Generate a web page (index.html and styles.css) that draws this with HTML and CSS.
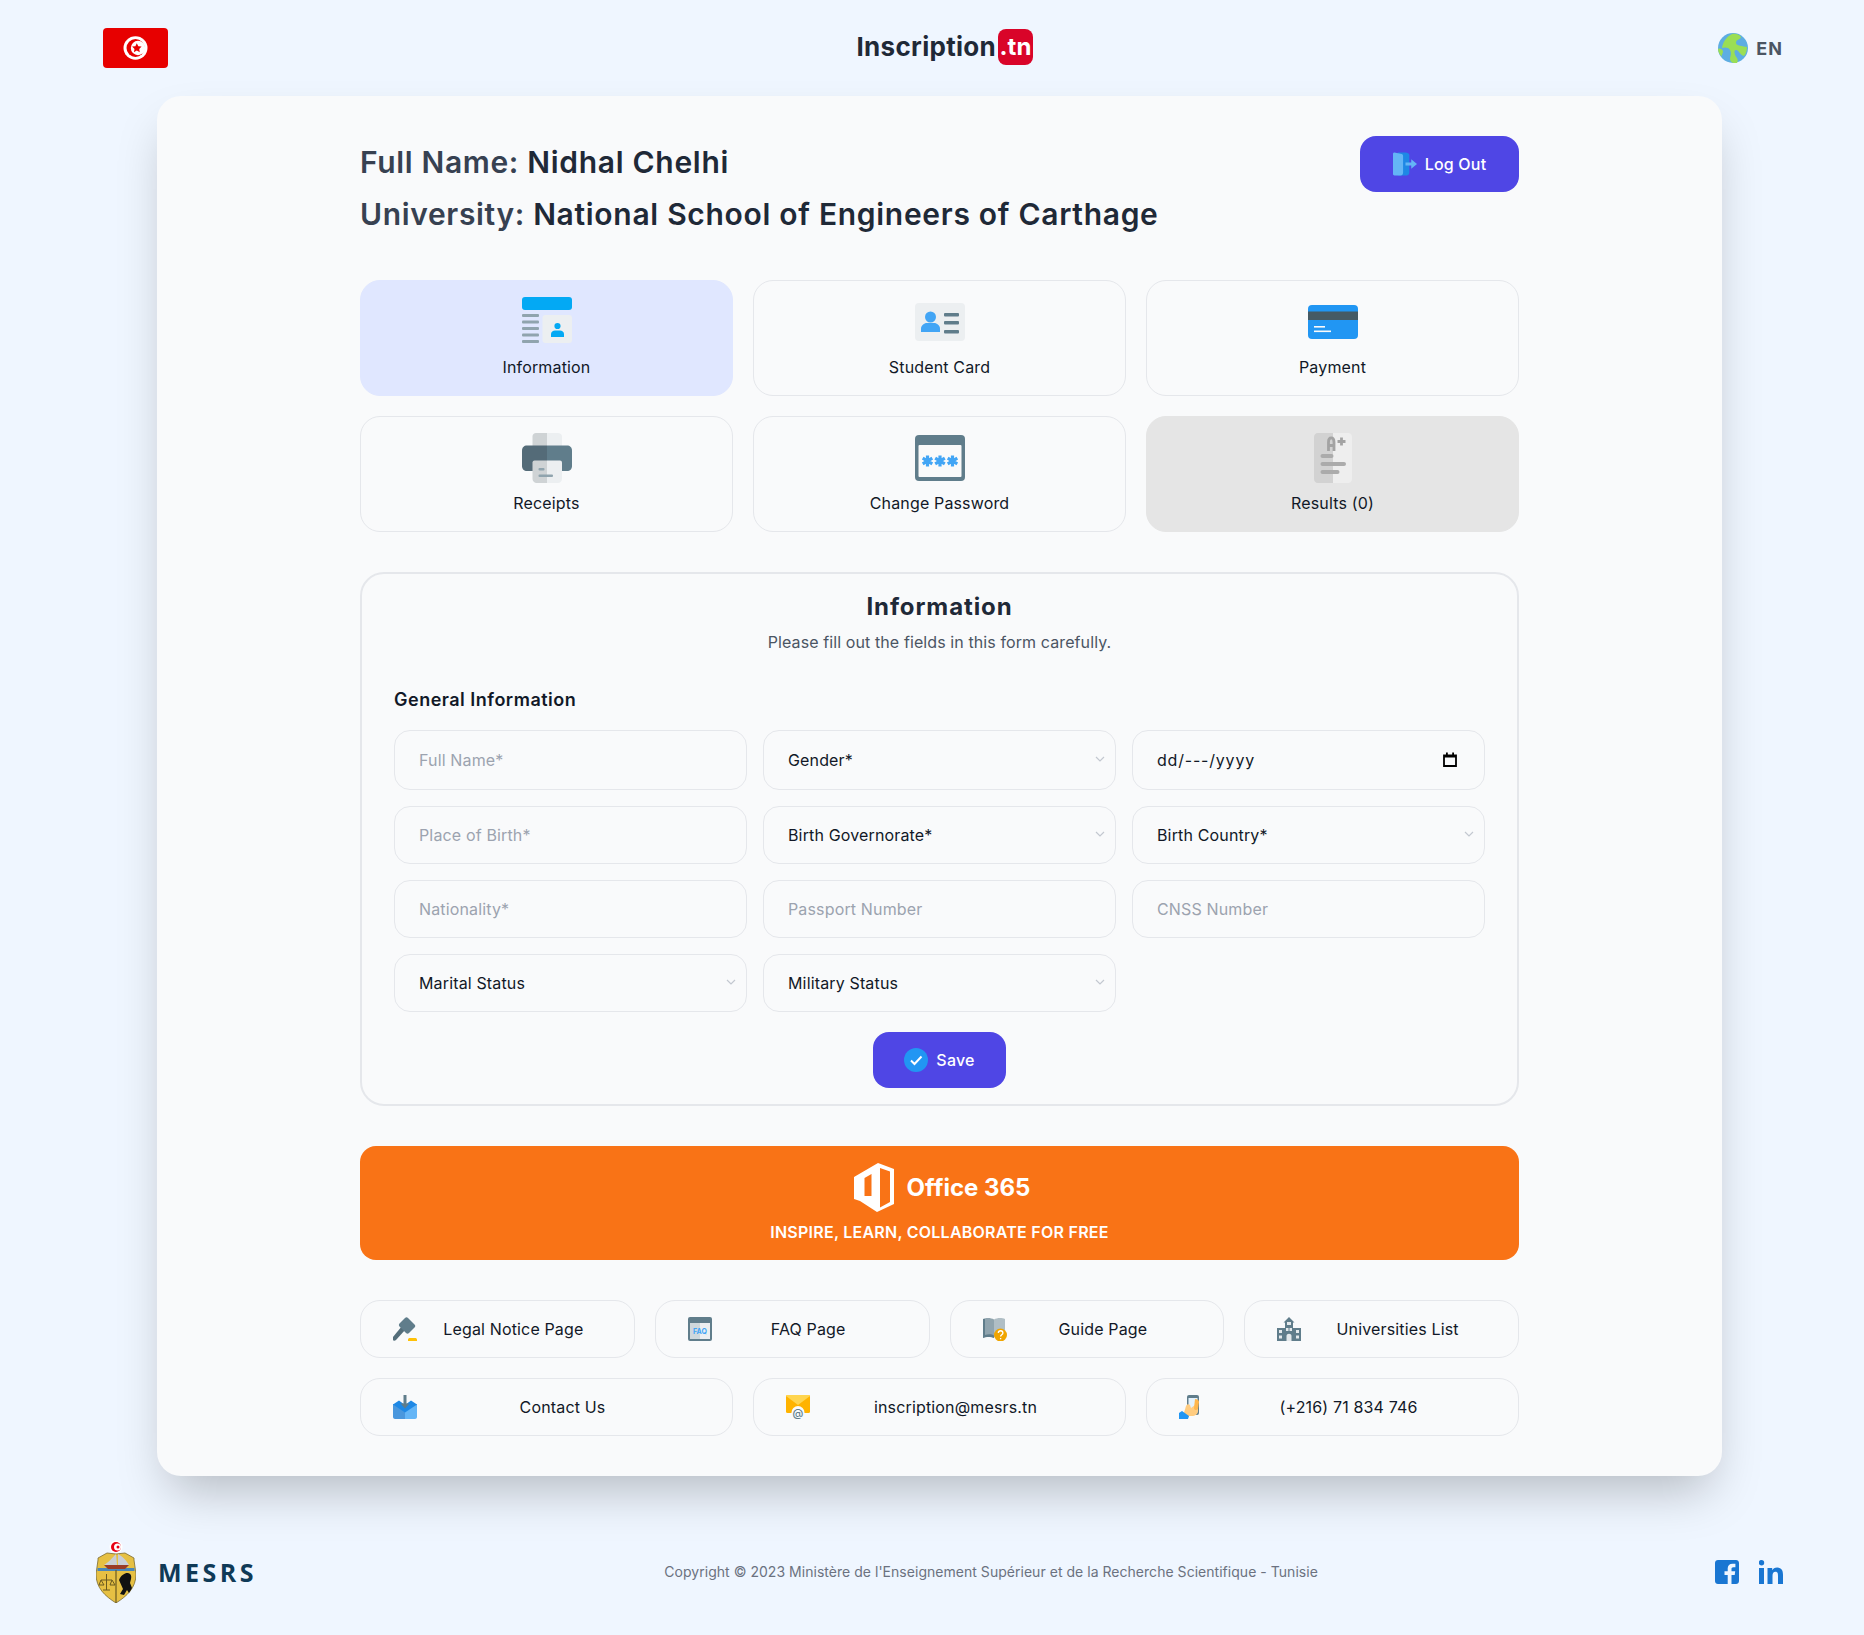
FILE: index.html
```html
<!DOCTYPE html>
<html lang="en">
<head>
<meta charset="utf-8">
<title>Inscription.tn</title>
<link rel="stylesheet" href="styles.css">
</head>
<body>
<header class="topbar">
  <svg class="flag" viewBox="0 0 65 40"><rect width="65" height="40" rx="4" fill="#e70000"/><ellipse cx="32.500" cy="20" rx="12" ry="11.700" fill="#fff"/><circle cx="32.500" cy="20" r="9" fill="#e70000"/><circle cx="35" cy="20" r="7.200" fill="#fff"/><path d="M33.800 15.200l1.500 3 3.300.4-2.400 2.300.6 3.300-3-1.600-2.900 1.600.6-3.300-2.400-2.300 3.300-.4z" fill="#e70000"/></svg>
  <div class="brand"><span>Inscription</span><span class="brand-badge">.tn</span></div>
  <div class="lang">
    <svg class="globe" viewBox="0 0 30 30"><circle cx="15" cy="15" r="15" fill="#5dade2"/><path d="M14 1c4-1 8 1 9 3-1 3-5 2-5 6 0 3 7 3 11 4 0 3-1 7-3 9-4-1-5-6-8-6-3 0-1 6 1 8 1 2 1 3 0 5-3 1-7-1-7-4 0-3 2-5 0-9-1-3-6-3-8-2 1-6 4-11 10-14z" fill="#9ade55"/><path d="M0 16c2-1 4 0 5 2 0 3-2 4-1 6-2-2-4-5-4-8z" fill="#9ade55"/></svg>
    <span>EN</span>
  </div>
</header>

<main class="card">
  <section class="identity">
    <div class="identity-text">
      <h2 class="id-line">Full Name: <strong>Nidhal Chelhi</strong></h2>
      <h2 class="id-line">University: <strong>National School of Engineers of Carthage</strong></h2>
    </div>
    <button class="btn btn-logout" type="button">
      <svg class="ico24" viewBox="0 0 25 24"><path d="M5 0h8c2 0 4 1 4 3v18c0 2-2 3-4 3H5z" fill="#1e88e5"/><path d="M1.500 0L9 1.500c1 .2 1.500 1 1.500 2V21c0 1.500-1 2.800-2.500 3L1.500 24C.6 24 0 23.400 0 22.500V1.500C0 .6.600 0 1.500 0z" fill="#64b5f6"/><path d="M13 10.500h6V7l6 5-6 5v-3.500h-6z" fill="#64b5f6"/></svg>
      <span>Log Out</span>
    </button>
  </section>

  <nav class="tiles">
    <a class="tile tile-active">
      <svg class="tile-ico" viewBox="0 0 50 50"><rect width="50" height="13" rx="3" fill="#03a9f4"/><g fill="#90a4ae"><rect y="17" width="17" height="3" rx="1"/><rect y="23.500" width="17" height="3" rx="1"/><rect y="30" width="17" height="3" rx="1"/><rect y="36.500" width="17" height="3" rx="1"/><rect y="43" width="17" height="3" rx="1"/></g><rect x="20.500" y="18" width="29.500" height="28" rx="3" fill="#eceff1"/><circle cx="35.500" cy="29" r="3.100" fill="#03a9f4"/><path d="M29 40v-3c0-2 2-3.500 4-3.500h5c2 0 4 1.500 4 3.500v3z" fill="#03a9f4"/></svg>
      <span>Information</span>
    </a>
    <a class="tile">
      <svg class="tile-ico" viewBox="0 0 50 50"><rect y="6" width="50" height="38" rx="4" fill="#eceff1"/><circle cx="15.500" cy="20" r="5.500" fill="#42a5f5"/><path d="M6 35v-3.500c0-3 3-5.500 6-5.500h7c3 0 6 2.500 6 5.500V35z" fill="#42a5f5"/><g fill="#607d8b"><rect x="29" y="16" width="15" height="3.400" rx="1"/><rect x="29" y="24" width="15" height="3.400" rx="1"/><rect x="29" y="33" width="15" height="3.400" rx="1"/></g></svg>
      <span>Student Card</span>
    </a>
    <a class="tile">
      <svg class="tile-ico" viewBox="0 0 50 50"><rect y="8" width="50" height="34" rx="4" fill="#2196f3"/><rect y="14.500" width="50" height="8.500" fill="#455a64"/><rect x="6" y="29" width="11" height="1.600" fill="#fafafa"/><rect x="6" y="33.500" width="17" height="1.600" fill="#fafafa"/></svg>
      <span>Payment</span>
    </a>
    <a class="tile">
      <svg class="tile-ico" viewBox="0 0 50 50"><path d="M25 0H14c-2 0-3.500 1.500-3.500 3.500V15H25z" fill="#cfd3d5"/><path d="M25 0h11c2 0 4 1.500 4 3.500V15H25z" fill="#eceff1"/><path d="M25 12.500H5c-3 0-5 2-5 5V33c0 3 2 5 5 5h20z" fill="#546b78"/><path d="M25 12.500h20c3 0 5 2 5 5V33c0 3-2 5-5 5H25z" fill="#607d8b"/><path d="M25 27.500H12.500c-1 0-2 .8-2 2V46c0 2 2 4 4 4H25z" fill="#cfd3d5"/><path d="M25 27.500h13c1 0 2 .8 2 2V46c0 2-2 4-4 4H25z" fill="#eceff1"/><rect x="16.500" y="35" width="6" height="2.500" rx="1" fill="#90a4ae"/><rect x="16.500" y="41.500" width="14.500" height="2.500" rx="1" fill="#90a4ae"/></svg>
      <span>Receipts</span>
    </a>
    <a class="tile">
      <svg class="tile-ico" viewBox="0 0 50 50"><rect y="2" width="50" height="46" rx="4" fill="#607d8b"/><rect x="3.500" y="12" width="43" height="32" rx="1" fill="#fafafa"/><g stroke="#42a5f5" stroke-width="3.200" fill="none"><path d="M12.500 22.500v11M7.700 25.200l9.600 5.600M7.700 30.800l9.600-5.600"/><path d="M25 22.500v11M20.200 25.200l9.600 5.600M20.200 30.800l9.600-5.600"/><path d="M37.500 22.500v11M32.700 25.200l9.600 5.600M32.700 30.800l9.600-5.600"/></g></svg>
      <span>Change Password</span>
    </a>
    <a class="tile tile-muted">
      <svg class="tile-ico" viewBox="0 0 50 50"><path d="M25 0H10C7.500 0 6 2 6 4v42c0 2 1.500 4 4 4h15z" fill="#d2d2d2"/><path d="M25 0h15c2.500 0 4 2 4 4v42c0 2-1.500 4-4 4H25z" fill="#eeeeee"/><path d="M20.500 18V9c0-5.500 5.500-5.500 5.500 0v9M20.500 12.500h5.500" stroke="#a3a3a3" stroke-width="2.800" fill="none"/><path d="M33.500 4.500v8M29.500 8.500h8" stroke="#a3a3a3" stroke-width="2.800" fill="none"/><g fill="#ababab"><rect x="12.500" y="21" width="13" height="4" rx="2"/><rect x="12.500" y="29" width="25.500" height="4" rx="2"/><rect x="12.500" y="37" width="19" height="4" rx="2"/></g></svg>
      <span>Results (0)</span>
    </a>
  </nav>

  <form class="form-box">
    <h3 class="form-title">Information</h3>
    <p class="form-sub">Please fill out the fields in this form carefully.</p>
    <h4 class="form-section">General Information</h4>
    <div class="form-grid">
      <input class="ctl" type="text" placeholder="Full Name*">
      <div class="sel"><select class="ctl"><option>Gender*</option></select><svg class="chev" viewBox="0 0 10 6"><path d="M1 1l4 4 4-4" fill="none" stroke="#c3c8d0" stroke-width="1.200"/></svg></div>
      <div class="sel"><input class="ctl ctl-date" type="text" value="dd/---/yyyy" aria-label="Birth date"><svg class="cal" viewBox="0 0 14 15"><path d="M1 3.500h12v10.500H1z" fill="none" stroke="#000" stroke-width="1.800"/><path d="M1 3h12v2.500H1zM3 .5h1.800v3H3zM9.200.5H11v3H9.200z"/></svg></div>
      <input class="ctl" type="text" placeholder="Place of Birth*">
      <div class="sel"><select class="ctl"><option>Birth Governorate*</option></select><svg class="chev" viewBox="0 0 10 6"><path d="M1 1l4 4 4-4" fill="none" stroke="#c3c8d0" stroke-width="1.200"/></svg></div>
      <div class="sel"><select class="ctl"><option>Birth Country*</option></select><svg class="chev" viewBox="0 0 10 6"><path d="M1 1l4 4 4-4" fill="none" stroke="#c3c8d0" stroke-width="1.200"/></svg></div>
      <input class="ctl" type="text" placeholder="Nationality*">
      <input class="ctl" type="text" placeholder="Passport Number">
      <input class="ctl" type="text" placeholder="CNSS Number">
      <div class="sel"><select class="ctl"><option>Marital Status</option></select><svg class="chev" viewBox="0 0 10 6"><path d="M1 1l4 4 4-4" fill="none" stroke="#c3c8d0" stroke-width="1.200"/></svg></div>
      <div class="sel"><select class="ctl"><option>Military Status</option></select><svg class="chev" viewBox="0 0 10 6"><path d="M1 1l4 4 4-4" fill="none" stroke="#c3c8d0" stroke-width="1.200"/></svg></div>
    </div>
    <div class="form-actions">
      <button class="btn btn-save" type="button">
        <svg class="ico24" viewBox="0 0 24 24"><circle cx="12" cy="12" r="12" fill="#2196f3"/><path d="M7 12.500l3.500 3.500L17.500 8.500" fill="none" stroke="#fff" stroke-width="2"/></svg>
        <span>Save</span>
      </button>
    </div>
  </form>

  <section class="office">
    <div class="office-head">
      <svg class="office-ico" viewBox="0 0 40 49"><path fill="#fff" fill-rule="evenodd" d="M0 14L24 0l16 6v35l-17 8-17-11-6-2zM10.500 15l7-4v22h-7zM26 5l10 3.500V39l-10 5.500z"/></svg>
      <span>Office 365</span>
    </div>
    <p class="office-sub">INSPIRE, LEARN, COLLABORATE FOR FREE</p>
  </section>

  <nav class="links links-4">
    <a class="link">
      <svg class="ico24" viewBox="0 0 24 24"><path d="M9 9l3.500 3.500L3 23c-1 1-2.500 1-3.300 0-.7-1-.5-2 .3-3z" fill="#546e7a"/><path d="M6.500 6.500L12 1c1-1 2-1 3 0l6.500 6.500c1 1 1 2 0 3L16 16c-1 1-2 1-3 0L6.500 9.500c-.8-1-.8-2 0-3z" fill="#607d8b"/><path d="M15 24v-1.500c0-1 1-1.500 2-1.500h5c1 0 2 .5 2 1.500V24z" fill="#ffc107"/></svg>
      <span>Legal Notice Page</span>
    </a>
    <a class="link">
      <svg class="ico24" viewBox="0 0 24 24"><rect y="0" width="24" height="24" rx="2" fill="#607d8b"/><rect x="2" y="6" width="10" height="16" fill="#cfd8dc"/><rect x="12" y="6" width="10" height="16" fill="#eceff1"/><text class="faq" x="12" y="17" text-anchor="middle">FAQ</text></svg>
      <span>FAQ Page</span>
    </a>
    <a class="link">
      <svg class="ico24" viewBox="0 0 24 24"><path d="M0 2c3-1.500 8-1.500 11 .5V20c-3-1.500-8-1.500-11 0z" fill="#90a4ae"/><path d="M11 2.500c3-2 8-2 11-.5v18H11z" fill="#b0bec5"/><path d="M0 2h2v16c3-1 7-1 9 .5V21c-3-1.500-8-1.500-11 0z" fill="#607d8b"/><circle cx="17.500" cy="18" r="6.500" fill="#f0a500"/><path d="M15.300 16c.2-3 4.600-3 4.600 0 0 1.800-2.300 1.800-2.300 3.500M17.600 21v1.200" stroke="#fff" stroke-width="1.300" fill="none"/></svg>
      <span>Guide Page</span>
    </a>
    <a class="link">
      <svg class="ico24" viewBox="0 0 24 24"><path d="M12 0l5.500 5.500H16V11h8v13H0V11h8V5.500H6.500z" fill="#607d8b"/><g fill="#e4e9ec"><rect x="2" y="13" width="3" height="3"/><rect x="19" y="13" width="3" height="3"/><rect x="2" y="18.500" width="3" height="3"/><rect x="19" y="18.500" width="3" height="3"/><rect x="10" y="5" width="4" height="3"/><rect x="9" y="11" width="2.500" height="3"/><rect x="12.500" y="11" width="2.500" height="3"/><path d="M9.500 24v-5c0-3 5-3 5 0v5z"/></g></svg>
      <span>Universities List</span>
    </a>
  </nav>

  <nav class="links links-3">
    <a class="link">
      <svg class="ico24" viewBox="0 0 24 24"><path d="M12 10v14h10c1 0 2-1 2-2V9z" fill="#64b5f6"/><path d="M0 9v13c0 1 1 2 2 2h10V10z" fill="#4a97dd"/><path d="M0 9.500L6 5.500 12 10l6-4.500 6 4-12 8z" fill="#1e88e5"/><path d="M12 13.500L7.500 8.500h3V0h3v8.500h3z" fill="#607d8b"/></svg>
      <span>Contact Us</span>
    </a>
    <a class="link">
      <svg class="ico24" viewBox="0 0 24 24"><rect y="0" width="24" height="18" rx="1.500" fill="#ffb300"/><path d="M0 1c0-.5.500-1 1-1h22c.5 0 1 .5 1 1L12 10z" fill="#ffd54f"/><circle cx="12" cy="17.500" r="6.500" fill="#f9fafb"/><text class="at" x="12" y="22" text-anchor="middle">@</text></svg>
      <span>inscription@mesrs.tn</span>
    </a>
    <a class="link">
      <svg class="ico24" viewBox="0 0 24 24"><rect x="8" y="0" width="12" height="20" rx="2" fill="#607d8b"/><rect x="9.500" y="3" width="9" height="14.500" fill="#e3f2fd"/><path d="M4 21L7 11c1-2 3-2 4-1l1 3 4-3 3 1v5c0 3-3 5-6 5h-3l-2 3z" fill="#ffcc80"/><path d="M16 4c2 0 4 1 4 3l-1 7c-2 2-4 1-4-1z" fill="#ffb74d"/><path d="M0 18l3-2 7 5-1 3H0z" fill="#2196f3"/></svg>
      <span>(+216) 71 834 746</span>
    </a>
  </nav>
</main>

<footer class="footer">
  <div class="ministry">
    <svg class="crest" viewBox="0 0 40 63"><circle cx="20" cy="7" r="6.500" fill="#fff"/><circle cx="20" cy="7" r="5" fill="#e70013"/><circle cx="21.500" cy="7" r="3.500" fill="#fff"/><circle cx="22" cy="7" r="1.500" fill="#e70013"/><path d="M2 18l9-5 9 1 9-1 9 5v2l2 14c0 14-9 22-20 29C9 56 0 48 0 34l2-14z" fill="#e6c043" stroke="#7a6a30" stroke-width=".8"/><path d="M1.500 28h37v3h-37z" fill="#4a86b8"/><path d="M20 30v33" stroke="#6b5a20" stroke-width="1.200"/><path d="M8 25c4-2 9-8 12-11l1 11zM22 14c4 2 9 7 11 11H22z" fill="#c9ced6"/><path d="M8 25h25l-4 4H12z" fill="#9a3b26"/><path d="M5 40h11M10.500 34v16M7 50h7M5 40l-2 5h5zM16 40l-2 5h5z" stroke="#6b5a20" stroke-width="1" fill="none"/><path d="M23 40c2-5 6-7 8-7 3 0 5 2 4 6l-1 4 2 5-3 5-2-3-3 5-4-1 3-5z" fill="#111"/></svg>
    <span class="ministry-name">MESRS</span>
  </div>
  <p class="copyright">Copyright © 2023 Ministère de l'Enseignement Supérieur et de la Recherche Scientifique - Tunisie</p>
  <div class="socials">
    <svg class="social" viewBox="0 0 24 24"><path fill="#1976d2" d="M3 0h18c1.700 0 3 1.300 3 3v18c0 1.700-1.300 3-3 3h-4.500v-9h3.200l.5-3.800h-3.700V9c0-1.100.4-1.800 1.900-1.800h2V3.800c-.4 0-1.500-.1-2.900-.1-2.900 0-4.800 1.700-4.800 4.900v2.600H9.500V15h3.200v9H3c-1.700 0-3-1.300-3-3V3c0-1.700 1.300-3 3-3z"/></svg>
    <svg class="social" viewBox="0 0 24 24"><path fill="#1976d2" d="M0 8h5v16H0zM2.500 0a2.700 2.700 0 110 5.400 2.700 2.700 0 010-5.400zM8.500 8h4.700v2.300c.8-1.500 2.500-2.700 5-2.700 4.800 0 5.800 3.100 5.800 7.300V24h-5v-8c0-2-.1-4.200-2.500-4.200s-3 2-3 4.100V24h-5z"/></svg>
  </div>
</footer>
</body>
</html>
```

FILE: styles.css
```css
* { box-sizing: border-box; }
html, body { margin: 0; padding: 0; }
body {
  background: #eff6ff;
  font-family: "Inter", "Noto Sans", "Liberation Sans", sans-serif;
  color: #111827;
  width: 1864px;
}
.topbar {
  height: 96px;
  display: flex;
  align-items: center;
  justify-content: space-between;
  padding: 0 81px 0 103px;
}
.flag { width: 65px; height: 40px; display: block; }
.brand { display: flex; align-items: center; font-size: 26px; line-height: 32px; font-weight: 700; color: #1f2937; letter-spacing: .3px; margin: -2px 0 0 3px; }
.brand-badge { background: #d90429; color: #fff; border-radius: 8px; height: 36px; line-height: 35px; padding: 0 1.500px; margin-left: 2px; font-size: 24px; letter-spacing: 0; }
.lang { display: flex; align-items: center; gap: 8px; font-size: 18px; font-weight: 700; color: #4b5563; letter-spacing: 1px; }
.globe { width: 30px; height: 30px; display: block; }

.card {
  margin: 0 142px 0 157px;
  padding: 40px 203px;
  background: #f9fafb;
  border-radius: 24px;
  box-shadow: 0 25px 50px -12px rgba(0, 0, 0, .25);
}
.identity { display: flex; justify-content: space-between; align-items: flex-start; margin-bottom: 48px; height: 96px; }
.identity-text { padding-top: 8px; }
.id-line { margin: 0 0 16px; font-size: 30px; line-height: 36px; font-weight: 600; color: #374151; letter-spacing: .65px; }
.id-line strong { font-weight: 600; color: #1f2937; letter-spacing: .7px; }

.btn { display: flex; align-items: center; justify-content: center; gap: 8px; border: 0; background: #4f46e5; color: #fff; font: 500 16px/24px "Inter", sans-serif; height: 56px; border-radius: 16px; padding: 0; letter-spacing: .2px; }
.btn-logout { width: 159px; }
.btn-save { width: 133px; }
.ico24 { width: 24px; height: 24px; display: block; flex: none; }

.tiles { display: grid; grid-template-columns: repeat(3, 1fr); gap: 20px; }
.tile { height: 116px; display: flex; flex-direction: column; align-items: center; padding: 16px; border: 1px solid #e5e7eb; border-radius: 20px; font-size: 16px; line-height: 24px; color: #111827; letter-spacing: .15px; }
.tile span { margin-top: 8px; }
.tile-ico { width: 50px; height: 50px; display: block; flex: none; }
.tile-active { background: #e0e7ff; border-color: #e0e7ff; }
.tile-muted { background: #e5e5e5; border-color: #e5e5e5; }

.form-box { margin-top: 40px; border: 2px solid #e5e7eb; border-radius: 24px; padding: 17px 32px 16px; }
.form-title { margin: 0; text-align: center; font-size: 24px; line-height: 32px; font-weight: 700; color: #1f2937; letter-spacing: .9px; }
.form-sub { margin: 7px 0 0; text-align: center; font-size: 16px; line-height: 24px; color: #4b5563; letter-spacing: .1px; }
.form-section { margin: 32px 0 16px; font-size: 18px; line-height: 28px; font-weight: 600; color: #111827; letter-spacing: .5px; }
.form-grid { display: grid; grid-template-columns: repeat(3, 1fr); grid-template-rows: 60px repeat(3, 58px); gap: 16px; }
.ctl {
  display: block; width: 100%; height: 100%;
  background: #f9fafb; border: 1px solid #e5e7eb; border-radius: 16px;
  padding: 0 24px; font: 400 16px "Inter", sans-serif; color: #111827; letter-spacing: .15px;
  appearance: none; outline: 0;
}
.ctl-date { letter-spacing: .8px; }
.ctl::placeholder { color: #9ca3af; opacity: 1; }
.sel { position: relative; }
.chev { position: absolute; right: 11px; top: 50%; width: 10px; height: 6px; margin-top: -4px; }
.cal { position: absolute; right: 28px; top: 50%; width: 14px; height: 15px; margin-top: -8px; }
.form-actions { display: flex; justify-content: center; margin-top: 20px; }

.office { margin-top: 40px; height: 114px; padding: 16px; background: #f97316; border-radius: 16px; color: #fff; text-align: center; }
.office-head { display: flex; justify-content: center; align-items: center; gap: 13px; height: 50px; padding-left: 5px; font-size: 24px; font-weight: 700; letter-spacing: 0; }
.office-ico { width: 40px; height: 49px; display: block; }
.office-sub { margin: 8px 0 0; font-size: 16px; line-height: 24px; font-weight: 600; letter-spacing: .25px; }

.links { display: grid; gap: 20px; }
.links-4 { grid-template-columns: repeat(4, 1fr); margin-top: 40px; }
.links-3 { grid-template-columns: repeat(3, 1fr); margin-top: 20px; }
.link { height: 58px; display: flex; align-items: center; padding: 0 32px; border: 1px solid #e5e7eb; border-radius: 20px; font-size: 16px; color: #111827; letter-spacing: .15px; }
.link span { flex: 1; text-align: center; margin-left: 8px; white-space: nowrap; }
.faq { font: 700 7px "Inter", sans-serif; fill: #42a5f5; letter-spacing: 0; }
.at { font: 500 11px "Inter", sans-serif; fill: #607d8b; letter-spacing: 0; }

.footer { height: 159px; padding: 64px 81px 0 96px; display: flex; justify-content: space-between; align-items: flex-start; }
.ministry { display: flex; align-items: center; gap: 22px; padding-right: 10px; }
.crest { width: 40px; height: 63px; display: block; }
.ministry-name { font: 700 25px "Open Sans", sans-serif; color: #0f3a57; letter-spacing: 3.500px; }
.copyright { margin: 22px 0 0; font-size: 14px; line-height: 20px; color: #6b7280; letter-spacing: .03px; }
.socials { display: flex; gap: 20px; padding-top: 20px; }
.social { width: 24px; height: 24px; display: block; }
```
